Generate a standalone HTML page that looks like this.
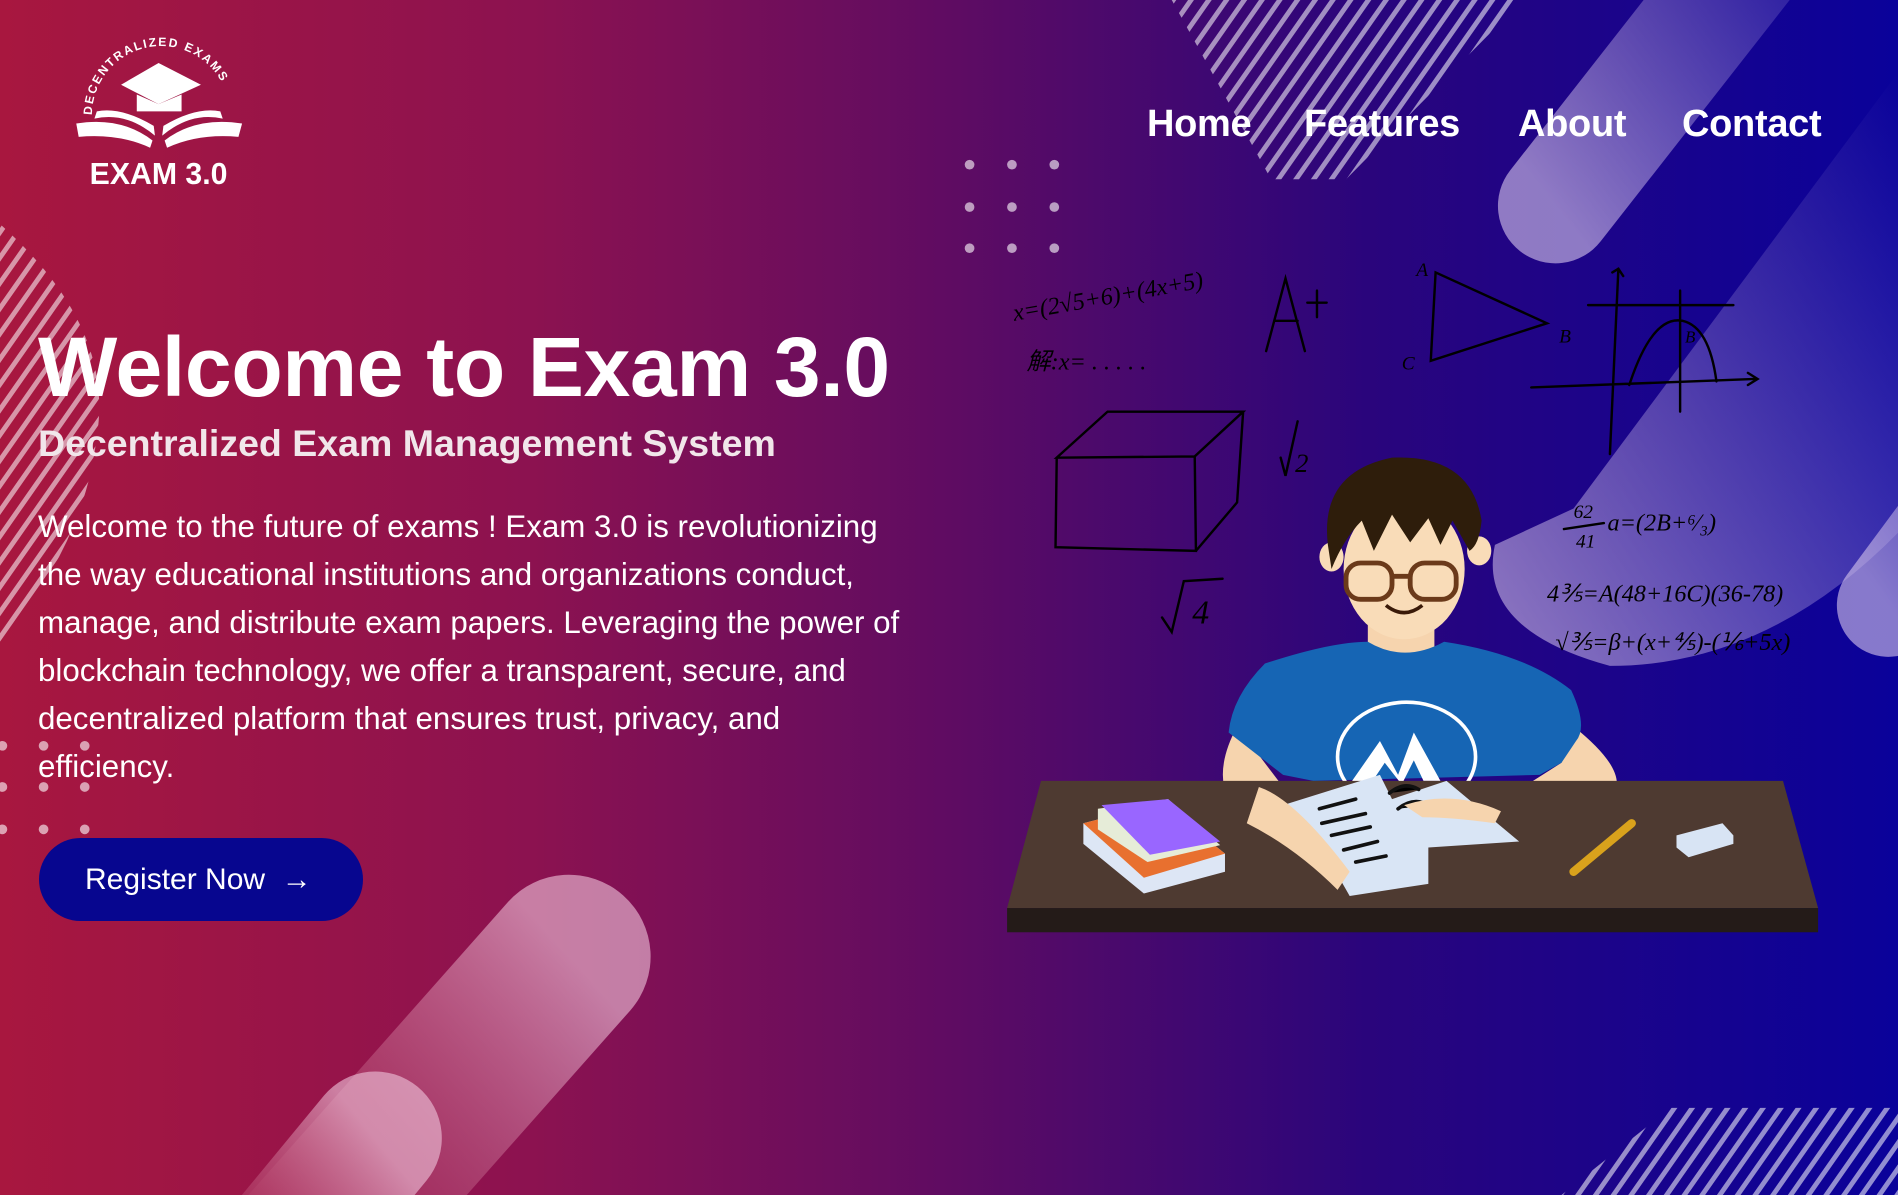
<!DOCTYPE html>
<html><head><meta charset="utf-8"><style>
*{margin:0;padding:0;box-sizing:border-box}
html,body{width:1898px;height:1195px;overflow:hidden}
body{position:relative;background:linear-gradient(90deg,#a8173f 0%,#8c1250 28%,#5f0c62 50%,#2a057c 72%,#0a029a 100%);font-family:"Liberation Sans",sans-serif;color:#fff}
svg.bg{position:absolute;left:0;top:0;width:1898px;height:1195px}
.nav{position:absolute;top:103px;font-size:38px;font-weight:900;letter-spacing:-0.3px;line-height:42px;color:#fff}
h1{position:absolute;left:38px;top:322px;font-size:84px;font-weight:700;letter-spacing:-0.3px;white-space:nowrap;line-height:90px}
h2{position:absolute;left:38px;top:420px;font-size:37.5px;font-weight:700;color:#f1e6ea;white-space:nowrap;line-height:46px}
p{position:absolute;left:38px;top:503px;font-size:31.3px;line-height:48px;color:#fff;white-space:nowrap}
.btn{position:absolute;left:39px;top:838px;width:324px;height:83px;border-radius:42px;background:#07068f;font-size:30px;line-height:83px;padding-left:46px}
</style></head><body>
<svg class="bg" viewBox="0 0 1568 987" preserveAspectRatio="none">
<defs>
<linearGradient id="pl" x1="0" y1="1" x2="1" y2="0"><stop offset="0" stop-color="#d9c8ee" stop-opacity=".6"/><stop offset="1" stop-color="#b8a8e8" stop-opacity="0"/></linearGradient>
<linearGradient id="pb" x1="1" y1="0" x2="0" y2="1"><stop offset="0" stop-color="#f0c6dc" stop-opacity=".6"/><stop offset=".6" stop-color="#c05070" stop-opacity=".1"/><stop offset="1" stop-color="#c05070" stop-opacity="0"/></linearGradient>
<pattern id="st" width="12" height="12" patternUnits="userSpaceOnUse" patternTransform="rotate(35)"><rect width="4" height="12" fill="#fff" fill-opacity=".55"/></pattern>
</defs>
<line x1="1285" y1="170" x2="1520" y2="-130" stroke="url(#pl)" stroke-width="95" stroke-linecap="round"/>
<path d="M1300 420 L1568 60 L1568 440 Q1460 550 1330 550 Q1220 520 1235 450 Z" fill="url(#pl)"/>
<line x1="1560" y1="500" x2="1760" y2="230" stroke="url(#pl)" stroke-width="85" stroke-linecap="round"/>
<line x1="470" y1="790" x2="80" y2="1230" stroke="url(#pb)" stroke-width="135" stroke-linecap="round"/>
<line x1="310" y1="940" x2="120" y2="1170" stroke="url(#pb)" stroke-width="110" stroke-linecap="round"/>
<polygon points="968,0 1258,0 1112,148 1050,148" fill="url(#st)"/>
<path d="M0 185 Q95 270 80 360 Q70 450 0 530 Z" fill="url(#st)"/>
<polygon points="1290,987 1380,915 1568,915 1568,987" fill="url(#st)"/>
<g fill="#fff" fill-opacity=".6">
<circle cx="801" cy="136" r="4"/><circle cx="836" cy="136" r="4"/><circle cx="871" cy="136" r="4"/>
<circle cx="801" cy="171" r="4"/><circle cx="836" cy="171" r="4"/><circle cx="871" cy="171" r="4"/>
<circle cx="801" cy="205" r="4"/><circle cx="836" cy="205" r="4"/><circle cx="871" cy="205" r="4"/>
<circle cx="2" cy="616" r="4"/><circle cx="36" cy="616" r="4"/><circle cx="70" cy="616" r="4"/>
<circle cx="2" cy="650" r="4"/><circle cx="36" cy="650" r="4"/><circle cx="70" cy="650" r="4"/>
<circle cx="2" cy="685" r="4"/><circle cx="36" cy="685" r="4"/><circle cx="70" cy="685" r="4"/>
</g>
<g fill="#fff">
<path d="M100 70 L131 52 L166 70 L131 86 Z"/><path d="M113 78 L113 92 L150 92 L150 78 L131 86 Z"/>
<path d="M63 102 Q100 96 126 116 L124 122 Q98 110 65 113 Z"/><path d="M200 102 Q162 96 136 116 L138 122 Q164 110 197 113 Z"/>
<path d="M78 98 Q104 92 128 112 L127 104 Q100 88 80 92Z"/><path d="M184 98 Q158 92 134 112 L135 104 Q162 88 182 92Z"/>
<text x="131" y="152" font-size="25" font-weight="900" text-anchor="middle" font-family="Liberation Sans">EXAM 3.0</text>
<path id="arc" d="M76 95 A56 56 0 0 1 190 95" fill="none"/>
<text font-size="10" font-weight="700" letter-spacing="1.5"><textPath href="#arc">DECENTRALIZED EXAMS</textPath></text>
</g>
<g fill="none" stroke="#000" stroke-width="2" stroke-linecap="round">
<path d="M873 378 L915 340 L1027 340 L987 377 Z M873 378 L872 452 L988 455 L987 377 M1027 340 L1022 415 L988 455"/>
<path d="M1186 225 L1182 298 L1278 267 Z"/>
<path d="M1312 252 L1432 252 M1265 320 L1450 313 M1337 222 L1330 375 M1346 318 Q1365 260 1390 265 Q1412 270 1418 315 M1388 240 L1388 340" />
<path d="M1332 225 L1337 222 L1341 228 M1444 308 L1452 313 L1444 318"/>
<path d="M1046 290 L1062 230 L1078 290 M1053 265 L1072 265 M1080 250 L1096 250 M1088 240 L1088 262"/>
<path d="M960 510 L968 522 L978 480 L1010 478 M1058 378 L1062 393 L1072 348"/>
<path d="M1292 437 L1325 432"/>
</g>
<g font-family="Liberation Serif" font-style="italic" font-size="20" fill="#000">
<text x="838" y="265" transform="rotate(-10 838 265)">x=(2√5+6)+(4x+5)</text>
<text x="848" y="305">解:x= . . . . .</text>
<text x="1070" y="390" font-size="22">2</text>
<text x="985" y="515" font-size="28">4</text>
<text x="1170" y="228" font-size="16">A</text><text x="1288" y="283" font-size="16">B</text><text x="1158" y="305" font-size="16">C</text>
<text x="1392" y="283" font-size="14">B</text>
<text x="1300" y="428" font-size="16">62</text><text x="1302" y="452" font-size="16">41</text>
<text x="1328" y="438" font-size="20">a=(2B+⁶⁄₃)</text>
<text x="1278" y="497" font-size="20">4⅗=A(48+16C)(36-78)</text>
<text x="1285" y="537" font-size="20">√⅗=β+(x+⅘)-(⅙+5x)</text>
</g>
<path d="M1022 600 Q995 650 1030 680 L1110 720 L1120 690 L1060 650 Z" fill="#f6d4ae"/>
<path d="M1300 600 Q1350 640 1330 660 L1240 690 L1235 665 L1290 630 Z" fill="#f6d4ae"/>
<rect x="1130" y="500" width="55" height="50" fill="#f6d4ae"/>
<path d="M1045 548 Q1100 530 1130 530 Q1160 548 1193 530 Q1260 540 1298 570 Q1312 600 1302 612 L1290 630 L1272 640 L1085 645 L1060 640 L1015 605 Q1018 575 1045 548 Z" fill="#1665b4"/>
<ellipse cx="1162" cy="625" rx="57" ry="45" fill="none" stroke="#fff" stroke-width="3"/>
<path d="M1117 645 L1140 612 L1155 640 L1168 605 L1190 645 L1176 645 L1168 628 L1158 648 L1144 630 L1132 648 Z" fill="#fff"/>
<ellipse cx="1160" cy="470" rx="50" ry="58" fill="#f9dcb8"/>
<ellipse cx="1100" cy="460" rx="10" ry="12" fill="#f9dcb8"/><ellipse cx="1222" cy="455" rx="10" ry="12" fill="#f9dcb8"/>
<path d="M1097 450 Q1090 390 1150 378 Q1215 375 1224 430 Q1222 450 1214 455 L1200 430 L1190 450 L1180 428 L1165 448 L1150 425 L1135 455 L1125 430 Q1110 445 1100 470 Z" fill="#2e1d0b"/>
<g fill="none" stroke="#6b3a1a" stroke-width="4"><rect x="1112" y="465" width="38" height="30" rx="12"/><rect x="1165" y="465" width="38" height="30" rx="12"/><path d="M1150 476 L1165 476"/></g>
<path d="M1145 500 Q1160 512 1175 500" fill="none" stroke="#3a1a08" stroke-width="3"/>
<polygon points="860,645 1473,645 1502,750 832,750" fill="#4e3a31"/>
<rect x="832" y="750" width="670" height="20" fill="#241b18"/>
<polygon points="895,680 960,663 1012,705 1012,720 945,738 895,697" fill="#dde6f5"/>
<polygon points="895,680 960,663 1012,705 945,725" fill="#e8702f"/>
<polygon points="907,668 965,660 1008,698 948,712 907,685" fill="#e6ecd8"/>
<polygon points="910,665 965,660 1008,695 950,706" fill="#9966ff"/>
<polygon points="1060,665 1140,640 1150,660 1195,645 1255,695 1180,700 1180,730 1115,740 1095,705" fill="#d9e5f5"/>
<g stroke="#111" stroke-width="3" stroke-linecap="round"><path d="M1090 668 L1120 660 M1092 680 L1128 672 M1100 690 L1132 683 M1110 702 L1138 695 M1120 712 L1145 707 M1148 655 Q1160 645 1172 652 M1155 668 Q1168 658 1180 665"/></g>
<path d="M1040 650 Q1070 660 1115 720 L1105 735 Q1070 700 1030 680Z" fill="#f6d4ae"/>
<path d="M1160 665 Q1200 652 1240 670 L1235 680 Q1200 675 1175 675Z" fill="#f6d4ae"/>
<line x1="1300" y1="720" x2="1348" y2="680" stroke="#d9a21c" stroke-width="7" stroke-linecap="round"/>
<polygon points="1385,690 1423,680 1432,690 1432,697 1395,708 1385,700" fill="#d8e4f4"/>
</svg>
<div class="nav" style="left:1147px">Home</div>
<div class="nav" style="left:1304px">Features</div>
<div class="nav" style="left:1518px">About</div>
<div class="nav" style="left:1682px">Contact</div>
<h1>Welcome to Exam 3.0</h1>
<h2>Decentralized Exam Management System</h2>
<p>Welcome to the future of exams ! Exam 3.0 is revolutionizing<br>the way educational institutions and organizations conduct,<br>manage, and distribute exam papers. Leveraging the power of<br>blockchain technology, we offer a transparent, secure, and<br>decentralized platform that ensures trust, privacy, and<br>efficiency.</p>
<div class="btn">Register Now &nbsp;→</div>
</body></html>
